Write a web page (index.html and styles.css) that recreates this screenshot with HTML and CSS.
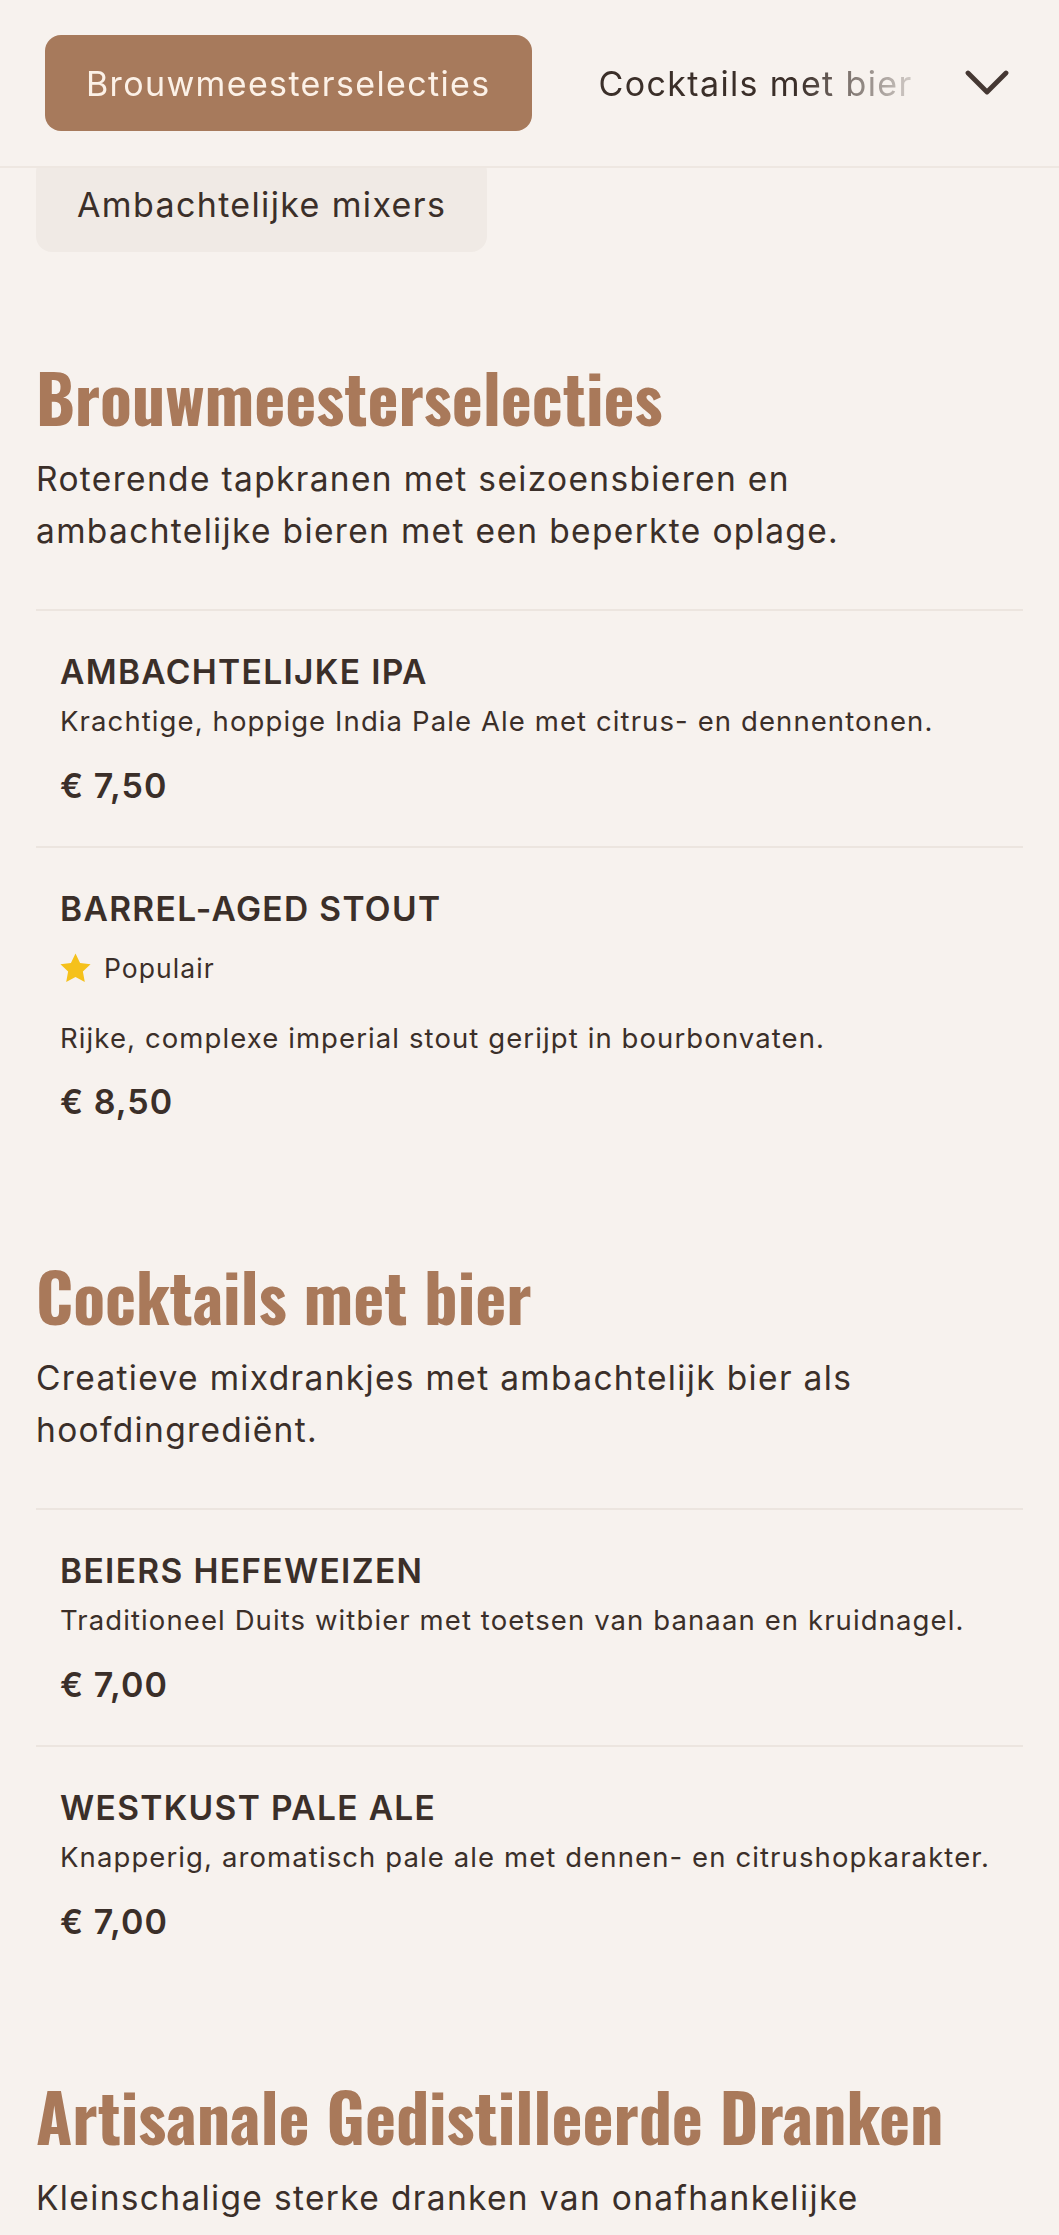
FILE: index.html
```html
<!DOCTYPE html>
<html lang="nl">
<head>
<meta charset="utf-8">
<title>Drankenkaart</title>
<link rel="stylesheet" href="styles.css">
</head>
<body>
<header class="topbar">
  <nav class="tabs">
    <a class="tab tab-active" href="#brouwmeester">Brouwmeesterselecties</a>
    <a class="tab" href="#cocktails">Cocktails met bier</a>
    <a class="tab" href="#gedistilleerd">Artisanale Gedistilleerde Dranken</a>
  </nav>
  <button class="toggle" aria-label="Meer categorieën">
    <svg class="chevron" viewBox="0 0 44 26" width="44" height="26"><polyline points="3,3 22,22 41,3" fill="none" stroke="#453833" stroke-width="4.8" stroke-linecap="round" stroke-linejoin="round"/></svg>
  </button>
</header>

<div class="subtabs">
  <a class="chip" href="#mixers">Ambachtelijke mixers</a>
</div>

<main class="menu">
  <section class="category" id="brouwmeester">
    <h2 class="category-title">Brouwmeesterselecties</h2>
    <p class="category-intro">Roterende tapkranen met seizoensbieren en ambachtelijke bieren met een beperkte oplage.</p>
    <ul class="items">
      <li class="item">
        <h3 class="item-name">AMBACHTELIJKE IPA</h3>
        <p class="item-desc">Krachtige, hoppige India Pale Ale met citrus- en dennentonen.</p>
        <p class="item-price">€ 7,50</p>
      </li>
      <li class="item">
        <h3 class="item-name">BARREL-AGED STOUT</h3>
        <div class="badge">
          <svg class="star" viewBox="1.5 1.5 21 21" width="31" height="31"><polygon points="12,1.8 15.1,8.3 22.2,9.2 17,14.1 18.3,21.2 12,17.8 5.7,21.2 7,14.1 1.8,9.2 8.9,8.3" fill="#f5c11b"/></svg>
          <span>Populair</span>
        </div>
        <p class="item-desc item-desc-spaced">Rijke, complexe imperial stout gerijpt in bourbonvaten.</p>
        <p class="item-price item-price-tight">€ 8,50</p>
      </li>
    </ul>
  </section>

  <section class="category" id="cocktails">
    <h2 class="category-title">Cocktails met bier</h2>
    <p class="category-intro">Creatieve mixdrankjes met ambachtelijk bier als hoofdingrediënt.</p>
    <ul class="items">
      <li class="item">
        <h3 class="item-name">BEIERS HEFEWEIZEN</h3>
        <p class="item-desc">Traditioneel Duits witbier met toetsen van banaan en kruidnagel.</p>
        <p class="item-price">€ 7,00</p>
      </li>
      <li class="item">
        <h3 class="item-name">WESTKUST PALE ALE</h3>
        <p class="item-desc">Knapperig, aromatisch pale ale met dennen- en citrushopkarakter.</p>
        <p class="item-price">€ 7,00</p>
      </li>
    </ul>
  </section>

  <section class="category" id="gedistilleerd">
    <h2 class="category-title">Artisanale Gedistilleerde Dranken</h2>
    <p class="category-intro">Kleinschalige sterke dranken van onafhankelijke distilleerderijen uit de regio.</p>
  </section>
</main>
</body>
</html>
```

FILE: styles.css
```css
* { box-sizing: border-box; }

html, body {
  margin: 0;
  padding: 0;
  background: #f7f2ee;
}

body {
  font-family: "Inter", "Noto Sans", "Liberation Sans", sans-serif;
  color: #3b2f29;
}

/* ---------- sticky category bar ---------- */
.topbar {
  position: sticky;
  top: 0;
  z-index: 2;
  height: 168px;
  display: flex;
  align-items: center;
  padding: 0 24px 0 45px;
  background: #f7f2ee;
  border-bottom: 2px solid #eee7e1;
}

.tabs {
  flex: 1;
  min-width: 0;
  display: flex;
  align-items: center;
  gap: 26px;
  overflow: hidden;
  -webkit-mask-image: linear-gradient(to right, #000 calc(100% - 140px), transparent 100%);
  mask-image: linear-gradient(to right, #000 calc(100% - 140px), transparent 100%);
}

.tab,
.chip {
  flex: none;
  display: inline-flex;
  align-items: center;
  height: 96px;
  padding: 0 41px;
  border-radius: 16px;
  font-size: 34px;
  letter-spacing: 0.04em;
  color: #3b2f29;
  text-decoration: none;
  white-space: nowrap;
}

.tab-active {
  background: #a77a5c;
  color: #fcf1e7;
}

.toggle {
  flex: none;
  width: 96px;
  height: 96px;
  display: flex;
  align-items: center;
  justify-content: center;
  padding: 0;
  border: 0;
  background: transparent;
}

.chevron { display: block; }

/* ---------- second chip row (partly under the bar) ---------- */
.subtabs {
  margin-top: -12px;
  margin-bottom: 11px;
  padding: 0 36px;
}

.chip {
  background: #f0eae5;
}

/* ---------- menu ---------- */
.menu {
  padding: 0 36px;
}

.category {
  padding-top: 93px;
}

.category-title {
  margin: 0;
  font-family: "Oswald", "Liberation Sans Narrow", "Arial Narrow", "DejaVu Sans Condensed", sans-serif;
  font-weight: 700;
  font-size: 66px;
  line-height: 80px;
  color: #a9795a;
}

.category-intro {
  margin: 17px 0 0;
  max-width: 880px;
  font-size: 33.5px;
  line-height: 52px;
  letter-spacing: 0.04em;
}

.items {
  list-style: none;
  margin: 52px 0 0;
  padding: 0;
}

.item {
  border-top: 2px solid #ece5df;
  padding: 40px 0 40px 24px;
}

.item-name {
  margin: 0;
  font-size: 33.5px;
  line-height: 42px;
  font-weight: 600;
  letter-spacing: 0.04em;
}

.item-desc {
  margin: 10px 0 0;
  font-size: 27.5px;
  line-height: 36px;
  letter-spacing: 0.04em;
}

.item-desc-spaced { margin-top: 34px; }

.item-price {
  margin: 27px 0 0;
  font-size: 34px;
  line-height: 40px;
  font-weight: 600;
  letter-spacing: 0.03em;
}

.item-price-tight { margin-top: 26px; }

.badge {
  margin-top: 20px;
  height: 36px;
  display: flex;
  align-items: center;
  gap: 13px;
  font-size: 26.5px;
  letter-spacing: 0.04em;
}

.star { display: block; flex: none; }
```
